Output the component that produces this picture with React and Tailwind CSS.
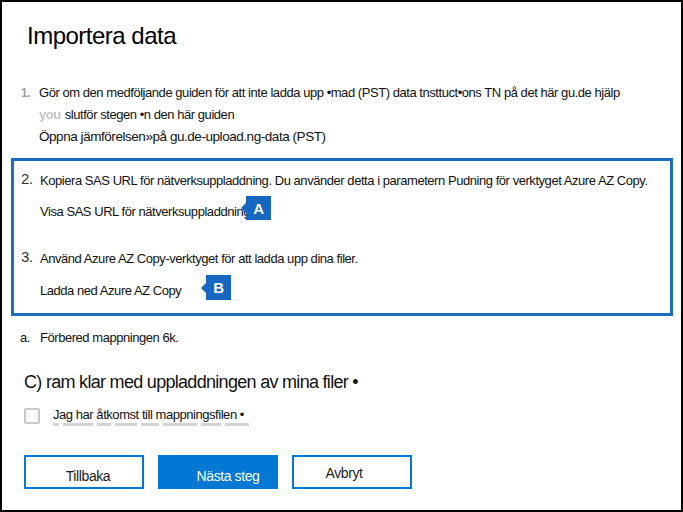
import React from 'react';

const Badge = ({ label, className = '' }) => (
  <div className={`relative flex items-center justify-center w-[25px] bg-[#1567bf] text-white text-[15px] font-bold leading-none ${className}`}>
    <span className="absolute left-[-5px] top-1/2 -translate-y-1/2 w-0 h-0 border-y-[5px] border-y-transparent border-r-[5px] border-r-[#1567bf]" />
    {label}
  </div>
);

// faint, blurred leftover line under the checkbox label
const ghost = [6, 30, 14, 22, 18, 34, 20, 24];

const App = () => {
  return (
    <div className="w-[683px] h-[512px] border-2 border-black bg-white pl-[9px] pr-[8px] text-[#111] font-['Liberation_Sans',Arial,sans-serif] overflow-hidden">
      <h1 className="mt-[18px] ml-[16px] text-[24px] leading-[32px] tracking-[-0.5px] text-black">Importera data</h1>

      <div className="mt-[30px] pl-[10px] text-[13px] leading-[22px] tracking-[-0.45px]">
        <div className="flex">
          <span className="w-[18px] text-[#a0a0a0] font-bold text-[12px]">1.</span>
          <span>Gör om den medföljande guiden för att inte ladda upp •mad (PST) data tnsttuct•ons TN på det här gu.de hjälp</span>
        </div>
        <div className="flex pl-[18px]">
          <span className="text-[#c4c4c4] font-bold blur-[0.4px] mr-[4px]">you</span>
          <span>slutför stegen •n den här guiden</span>
        </div>
        <div className="pl-[18px] text-[13.5px]">Öppna jämförelsen»på gu.de-upload.ng-data (PST)</div>
      </div>

      <div className="mt-[10px] border-[3px] border-[#1a6dbf] pl-[7px] pt-[9px] pb-[11px] text-[13px] tracking-[-0.45px]">
        <div className="flex leading-[22px]">
          <span className="w-[19px] text-[#333] text-[15px] -mt-[2px]">2.</span>
          <span>Kopiera SAS URL för nätverksuppladdning. Du använder detta i parametern Pudning för verktyget Azure AZ Copy.</span>
        </div>
        <div className="flex items-start mt-[3px] pl-[19px]">
          <span className="w-[206px] shrink-0 mt-[6px] leading-[22px] whitespace-nowrap">Visa SAS URL för nätverksuppladdning</span>
          <Badge label="A" className="mt-[1px] h-[24px]" />
        </div>

        <div className="flex leading-[22px] mt-[25px]">
          <span className="w-[19px] text-[#333] text-[15px] -mt-[2px]">3.</span>
          <span>Använd Azure AZ Copy-verktyget för att ladda upp dina filer.</span>
        </div>
        <div className="flex items-start mt-[4px] pl-[19px]">
          <span className="w-[166px] shrink-0 mt-[6px] leading-[22px] whitespace-nowrap">Ladda ned Azure AZ Copy</span>
          <Badge label="B" className="mt-[1px] h-[25px]" />
        </div>
      </div>

      <div className="flex mt-[11px] pl-[9px] text-[13px] leading-[22px] tracking-[-0.45px]">
        <span className="w-[20px]">a.</span>
        <span>Förbered mappningen 6k.</span>
      </div>

      <h2 className="mt-[21px] pl-[13px] text-[18px] leading-[24px] tracking-[-0.7px] text-[#111]">C) ram klar med uppladdningen av mina filer •</h2>

      <div className="flex items-start mt-[14px] pl-[13px]">
        <div className="w-[16px] h-[16px] border-2 border-[#c8c8c8] rounded-[2px] shrink-0" />
        <div className="ml-[13px]">
          <div className="text-[13px] leading-[14px] tracking-[-0.45px]">Jag har åtkomst till mappningsfilen •</div>
          <div className="flex gap-[4px] mt-[1px] h-[3px] blur-[0.6px]">
            {ghost.map((w, i) => (
              <div key={i} className="h-[3px] bg-[#d4d4d4]" style={{ width: w }} />
            ))}
          </div>
        </div>
      </div>

      <div className="flex gap-[14px] mt-[29px] pl-[13px] text-[14px] tracking-[-0.4px]">
        <button className="w-[120px] h-[34px] border-2 border-[#0078d4] bg-white text-[#222] flex items-center justify-center pl-[8px] pt-[8px]">Tillbaka</button>
        <button className="w-[120px] h-[34px] border-2 border-[#0078d4] bg-[#0078d4] text-white flex items-center justify-center pl-[20px] pt-[8px]">Nästa steg</button>
        <button className="w-[120px] h-[34px] border-2 border-[#0078d4] bg-white text-[#222] flex items-center justify-center pr-[16px] pt-[2px]">Avbryt</button>
      </div>
    </div>
  );
};

export default App;
